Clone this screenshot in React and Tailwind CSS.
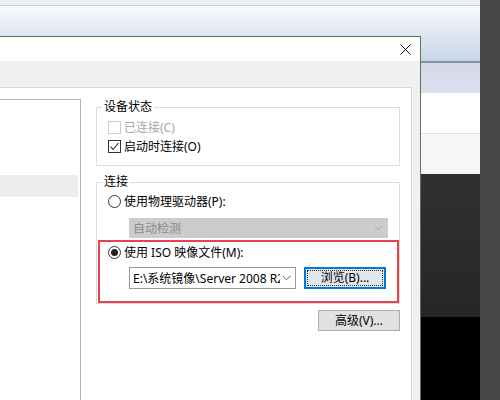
const font = { fontFamily: '"Noto Sans", "Noto Sans CJK SC", sans-serif' };

const Chevron = ({ color }) => (
  <svg width="9" height="6" viewBox="0 0 9 6" className="shrink-0">
    <polyline points="0.5,0.8 4.5,4.8 8.5,0.8" fill="none" stroke={color} strokeWidth="1" />
  </svg>
);

const CheckBox = ({ checked, disabled, label }) => (
  <div className="h-[19px] flex items-center gap-[3px]">
    <div
      className={`w-[13px] h-[13px] border bg-white flex items-center justify-center ${
        disabled ? "border-[#cccccc]" : "border-[#333333]"
      }`}
    >
      {checked && (
        <svg width="11" height="11" viewBox="0 0 11 11">
          <polyline points="1.5,5.5 4,8.5 9.5,2" fill="none" stroke="#222" strokeWidth="1.1" />
        </svg>
      )}
    </div>
    <span className={disabled ? "text-[#a8a8a8]" : "text-black"}>{label}</span>
  </div>
);

const Radio = ({ checked, label }) => (
  <div className="h-[19px] flex items-center gap-[3px]">
    <div className="w-[13px] h-[13px] rounded-full border border-[#333333] bg-white flex items-center justify-center">
      {checked && <div className="w-[7px] h-[7px] rounded-full bg-[#222222]" />}
    </div>
    <span>{label}</span>
  </div>
);

export default function App() {
  return (
    <div className="w-[500px] h-[400px] flex overflow-hidden text-[12px] leading-[19px] text-black" style={font}>
      <div className="w-[480px] flex flex-col">
        {/* background window title */}
        <div className="h-[36px] flex flex-col">
          <div className="h-[5px] bg-[#eef0f3]" />
          <div className="h-px bg-[#c6d1da]" />
          <div className="flex-1 bg-gradient-to-b from-[#f8fafd] to-[#dde6f1]" />
        </div>

        <div className="flex-1 flex">
          {/* dialog */}
          <div className="w-[421px] flex flex-col border-t border-r border-[#4d7d4f] bg-[#f0f0f0]">
            <div className="h-[24px] bg-white flex items-center justify-end pr-[9px]">
              <svg width="11" height="11" viewBox="0 0 11 11">
                <path d="M0.5 0.5 L10.5 10.5 M10.5 0.5 L0.5 10.5" stroke="#111" strokeWidth="1" />
              </svg>
            </div>
            <div className="h-[26px] bg-[#f0f0f0]" />
            <div className="flex-1 flex">
              <div className="w-[412px] bg-white border-t border-r border-[#d9d9d9] flex">
                {/* device list */}
                <div className="w-[81px] mt-[11px] border-t border-r border-[#b3b3b3] bg-white flex flex-col">
                  <div className="h-[75px]" />
                  <div className="h-[22px] bg-[#ececec] mr-[2px]" />
                </div>

                {/* settings */}
                <div className="pl-[15px] flex flex-col">
                  <div className="relative mt-[19px] w-[304px] h-[59px] border border-[#dcdcdc] pl-[11px] pt-[10px]">
                    <span className="absolute left-[5px] -top-[8px] px-[2px] bg-white leading-[14px]">设备状态</span>
                    <CheckBox disabled label="已连接(C)" />
                    <CheckBox checked label="启动时连接(O)" />
                  </div>

                  <div className="relative mt-[16px] w-[304px] border border-[#dcdcdc] pt-[9px] flex flex-col">
                    <span className="absolute left-[5px] -top-[8px] px-[2px] bg-white leading-[14px]">连接</span>
                    <div className="pl-[11px]">
                      <Radio label="使用物理驱动器(P):" />
                    </div>
                    <div className="mt-[7px] ml-[32px] w-[259px] h-[20px] bg-[#cccccc] flex items-center justify-between pl-[4px] pr-[5px]">
                      <span className="text-[#8a8a8a]">自动检测</span>
                      <Chevron color="#a9a9a9" />
                    </div>
                    <div className="mt-[2px] ml-[1px] w-[301px] border-2 border-[#e5434d] pt-[1px] pb-[12px]">
                      <div className="pl-[8px]">
                        <Radio checked label="使用 ISO 映像文件(M):" />
                      </div>
                      <div className="mt-[5px] pl-[29px] flex gap-[8px]">
                        <div className="w-[167px] h-[22px] border border-[#9a9a9a] bg-white flex items-center pl-[3px] pr-[4px] gap-[2px]">
                          <span className="w-[151px] overflow-hidden whitespace-nowrap">E:\系统镜像\Server 2008 R2</span>
                          <Chevron color="#606060" />
                        </div>
                        <div className="w-[82px] h-[22px] border-2 border-[#0078d7] bg-[#e1e6ec] p-[1px]">
                          <div className="h-full border border-dotted border-[#333] flex items-center justify-center leading-none">
                            浏览(B)...
                          </div>
                        </div>
                      </div>
                    </div>
                  </div>

                  <div className="mt-[6px] self-end w-[82px] h-[21px] border border-[#adadad] bg-[#e1e1e1] flex items-center justify-center">
                    高级(V)...
                  </div>
                </div>
              </div>
              <div className="flex-1 bg-[#f0f0f0]" />
            </div>
          </div>

          {/* window behind, right side */}
          <div className="w-[59px] flex flex-col">
            <div className="h-[25px] bg-gradient-to-b from-[#dde6f1] to-[#c7d6e8]" />
            <div className="h-[2px] bg-[#8c939b]" />
            <div className="h-[30px] bg-gradient-to-b from-[#d3d8ea] to-[#dde0ee]" />
            <div className="h-[40px] bg-white" />
            <div className="h-px bg-[#e1e1e1]" />
            <div className="h-[40px] bg-[#f7f7f7]" />
            <div className="h-[143px] bg-gradient-to-b from-[#313131] to-[#262626]" />
            <div className="flex-1 bg-black" />
          </div>
        </div>
      </div>
      <div className="w-[20px] bg-[#474747]" />
    </div>
  );
}
